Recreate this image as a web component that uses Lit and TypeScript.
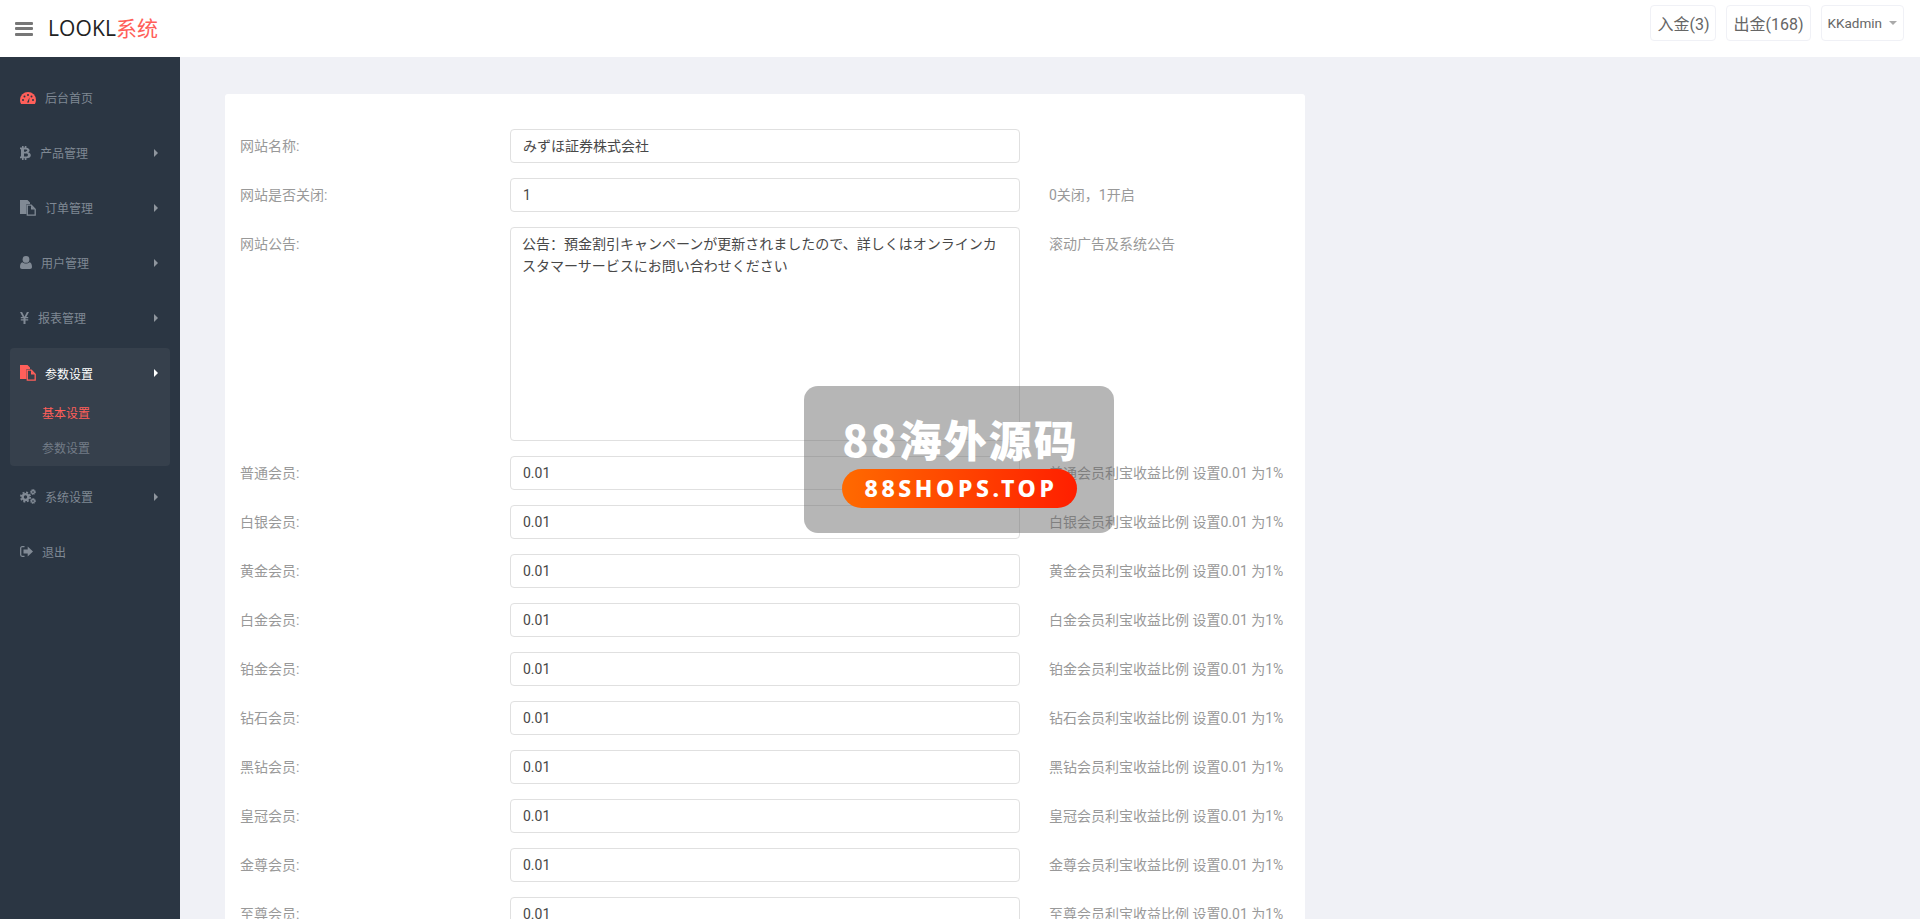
import { LitElement, html, css, svg } from "lit";
import { customElement } from "lit/decorators.js";

const icons: Record<string, { g: unknown }> = {
  gauge: { g: svg`<svg width="16" height="12" viewBox="0 0 16 12"><path fill="currentColor" d="M8 0a8 8 0 0 0-8 8c0 1.500.4 2.900 1.100 4h13.800A8 8 0 0 0 16 8a8 8 0 0 0-8-8z"/><g fill="#2b3643"><circle cx="3" cy="8" r="1"/><circle cx="4.500" cy="4.500" r="1"/><circle cx="8" cy="3" r="1"/><circle cx="11.500" cy="4.500" r="1"/><circle cx="13" cy="8" r="1"/><path d="M7 10.500 9.500 5.500 9 10.500z"/></g></svg>` },
  btc: { g: svg`<svg width="11" height="14" viewBox="0 0 11 14"><path fill="currentColor" fill-rule="evenodd" d="M2 0h1.600v1.600h1.200V0h1.600v1.700C8.400 2 9.600 3 9.600 4.300c0 1-.6 1.800-1.400 2.200 1.500.3 2.600 1.300 2.600 2.800 0 2-1.600 2.900-4.400 3V14H4.800v-1.700H3.600V14H2v-1.700H0v-1.900h1V3.300H0V1.600h2zM4 3.500v2.300h1.700c.9 0 1.500-.4 1.500-1.200S6.600 3.500 5.700 3.500zm0 4.100v2.900h2.100c1.100 0 1.800-.5 1.800-1.500S7.200 7.600 6.100 7.600z"/></svg>` },
  files: { g: svg`<svg width="16" height="16" viewBox="0 0 16 16"><path fill="currentColor" d="M0 0h7.500l2.500 2.600V4H6.500v10H0z"/><path fill="none" stroke="currentColor" stroke-width="1.300" d="M7.300 5.200h4l3.900 4v6h-7.900z"/><path fill="currentColor" d="M11 5.500 15 9.500h-4z"/></svg>` },
  user: { g: svg`<svg width="12" height="13" viewBox="0 0 12 13"><circle cx="6" cy="3.400" r="3.400" fill="currentColor"/><path fill="currentColor" d="M2.500 6.300C3.400 7 4.600 7.600 6 7.600s2.600-.6 3.500-1.300C11.200 6.600 12 8.400 12 11c0 1.300-.8 2-2 2H2c-1.200 0-2-.7-2-2 0-2.600.8-4.400 2.500-4.700z"/></svg>` },
  yen: { g: svg`<svg width="9" height="12" viewBox="0 0 9 12"><path fill="currentColor" d="M0 0h2.100l2.400 4.700L6.900 0H9L6.300 5H8.200v1.200H5.500V7.200h2.700v1.200H5.500V12h-2V8.400H.8V7.200h2.700V6.200H.8V5h1.900z"/></svg>` },
  cogs: { g: svg`<svg width="16" height="15" viewBox="0 0 16 15"><g fill="none" stroke="currentColor"><circle cx="5.500" cy="8" r="2.900" stroke-width="2.400"/><circle cx="5.500" cy="8" r="4.600" stroke-width="1.800" stroke-dasharray="2 1.610"/><circle cx="13" cy="3" r="1.500" stroke-width="1.300"/><circle cx="13" cy="3" r="2.500" stroke-width="1" stroke-dasharray="1.200 .76"/><circle cx="13" cy="12" r="1.500" stroke-width="1.300"/><circle cx="13" cy="12" r="2.500" stroke-width="1" stroke-dasharray="1.200 .76"/></g></svg>` },
  signout: { g: svg`<svg width="13" height="11" viewBox="0 0 13 11"><path fill="none" stroke="currentColor" stroke-width="1.300" d="M4.500.7H2.200C1.300.7.700 1.300.7 2.200v6.600c0 .9.600 1.500 1.500 1.500h2.300"/><path fill="currentColor" d="M7.700.5 13 5.500 7.700 10.500V7.500H3.500v-4h4.200z"/></svg>` },
};

type NavItem = { icon: string; label: string; arrow?: boolean; hot?: boolean };
const nav1: NavItem[] = [
  { icon: "gauge", label: "后台首页", hot: true },
  { icon: "btc", label: "产品管理", arrow: true },
  { icon: "files", label: "订单管理", arrow: true },
  { icon: "user", label: "用户管理", arrow: true },
  { icon: "yen", label: "报表管理", arrow: true },
];
const nav2: NavItem[] = [
  { icon: "cogs", label: "系统设置", arrow: true },
  { icon: "signout", label: "退出" },
];

const notice = "公告：預金割引キャンペーンが更新されましたので、詳しくはオンラインカスタマーサービスにお問い合わせください";
const levels = ["普通", "白银", "黄金", "白金", "铂金", "钻石", "黑钻", "皇冠", "金尊", "至尊"];

@customElement("app-root")
export class AppRoot extends LitElement {
  static styles = css`
    :host {
      display: block;
      width: 1920px;
      height: 919px;
      overflow: hidden;
      position: relative;
      background: #f0f1f6;
      font-family: Roboto, "Noto Sans CJK SC", sans-serif;
      font-size: 14px;
      color: #555;
    }
    .top {
      height: 57px;
      background: #fff;
      display: flex;
      align-items: center;
      box-sizing: border-box;
      padding: 0 16px 0 15px;
    }
    .burger { width: 18px; height: 14px; display: flex; flex-direction: column; justify-content: space-between; margin-right: 15px; }
    .burger i { display: block; height: 3px; background: #777; border-radius: 1px; }
    .brand { font-family: "Open Sans", "Noto Sans CJK SC", sans-serif; font-size: 21px; color: #222; letter-spacing: 0.1px; margin-bottom: 4px; }
    .brand span { color: #ff5f5a; letter-spacing: 0; }
    .spacer { flex: 1; }
    .tbtn {
      height: 36px;
      margin: 0 0 11px 10px;
      padding: 0 6px;
      box-sizing: border-box;
      border: 1px solid #f0f1f6;
      border-radius: 4px;
      display: flex;
      align-items: center;
      font-size: 16px;
      color: #666;
    }
    .tbtn.user { font-size: 13.5px; gap: 7px; }
    .caret { width: 0; height: 0; border: 4px solid transparent; border-top-color: #aaa; border-bottom: 0; }
    .body { display: flex; align-items: flex-start; }
    .side {
      width: 180px;
      height: 862px;
      background: #2b3643;
      padding-top: 13px;
      box-sizing: border-box;
      flex: none;
      color: #7f8893;
      font-size: 12px;
    }
    .nav {
      height: 55px;
      display: flex;
      align-items: center;
      padding: 0 22px 0 20px;
    }
    .icon { display: flex; color: #818a95; margin-right: 9px; }
    .icon.hot { color: #ff5f5a; }
    .label { flex: 1; }
    .arrow { width: 0; height: 0; border: 4px solid transparent; border-left-color: #8f969e; border-right: 0; }
    .panel { margin: 3px 10px; background: #36404c; border-radius: 4px; height: 118px; }
    .panel .nav { box-sizing: border-box; padding: 3px 12px 0 10px; color: #fff; height: 47px; }
    .panel .icon { color: #ff5f5a; }
    .panel .arrow { border-left-color: #fff; }
    .sub { height: 35px; display: flex; align-items: center; padding-left: 32px; color: #737c87; }
    .sub.on { color: #ff5f5a; }
    .main { padding: 37px 0 0 45px; }
    .card {
      width: 1080px;
      background: #fff;
      border-radius: 3px;
      padding: 35px 0 0 15px;
      box-sizing: border-box;
      color: #999;
    }
    .row { display: flex; align-items: flex-start; margin-bottom: 15px; }
    .row .lbl { width: 270px; padding-top: 7px; height: 20px; line-height: 20px; flex: none; }
    .field {
      width: 510px;
      height: 34px;
      box-sizing: border-box;
      border: 1px solid #e0e0e0;
      border-radius: 4px;
      padding: 0 12px;
      line-height: 32px;
      color: #484848;
      flex: none;
    }
    .field.area { height: 214px; line-height: 22px; padding: 5px 11px; }
    .hint { margin-left: 29px; padding-top: 7px; line-height: 20px; white-space: nowrap; }
    .mark {
      position: absolute;
      left: 804px;
      top: 386px;
      width: 310px;
      height: 147px;
      border-radius: 14px;
      background: rgba(100, 100, 100, 0.47);
      display: flex;
      flex-direction: column;
      align-items: center;
      box-sizing: border-box;
      padding-top: 27px;
    }
    .mark .t {
      color: #fff;
      font-family: "Noto Sans CJK SC", sans-serif;
      font-weight: 900;
      font-size: 43px;
      line-height: 50px;
      letter-spacing: 2px;
      padding-left: 3px;
    }
    .mark .p {
      margin-top: 6px;
      width: 235px;
      height: 39px;
      box-sizing: border-box;
      padding-left: 4px;
      border-radius: 20px;
      background: linear-gradient(90deg, #ff6a00, #ff1f00);
      color: #fff;
      font-family: "Noto Sans", sans-serif;
      font-weight: 800;
      font-size: 23px;
      letter-spacing: 3.6px;
      line-height: 39px;
      text-align: center;
    }
  `;

  private item(n: NavItem) {
    return html`<div class="nav">
      <span class="icon ${n.hot ? "hot" : ""}">${icons[n.icon].g}</span>
      <span class="label">${n.label}</span>
      ${n.arrow ? html`<span class="arrow"></span>` : ""}
    </div>`;
  }

  render() {
    return html`
      <div class="top">
        <div class="burger"><i></i><i></i><i></i></div>
        <div class="brand">LOOKL<span>系统</span></div>
        <div class="spacer"></div>
        <div class="tbtn">入金(3)</div>
        <div class="tbtn">出金(168)</div>
        <div class="tbtn user">KKadmin <span class="caret"></span></div>
      </div>
      <div class="body">
        <div class="side">
          ${nav1.map((n) => this.item(n))}
          <div class="panel">
            ${this.item({ icon: "files", label: "参数设置", arrow: true })}
            <div class="sub on">基本设置</div>
            <div class="sub">参数设置</div>
          </div>
          ${nav2.map((n) => this.item(n))}
        </div>
        <div class="main">
          <div class="card">
            <div class="row"><div class="lbl">网站名称:</div><div class="field">みずほ証券株式会社</div></div>
            <div class="row"><div class="lbl">网站是否关闭:</div><div class="field">1</div><div class="hint">0关闭，1开启</div></div>
            <div class="row"><div class="lbl">网站公告:</div><div class="field area">${notice}</div><div class="hint">滚动广告及系统公告</div></div>
            ${levels.map(
              (l) => html`<div class="row"><div class="lbl">${l}会员:</div><div class="field">0.01</div><div class="hint">${l}会员利宝收益比例 设置0.01 为1%</div></div>`
            )}
          </div>
        </div>
      </div>
      <div class="mark">
        <div class="t">88海外源码</div>
        <div class="p">88SHOPS.TOP</div>
      </div>
    `;
  }
}
